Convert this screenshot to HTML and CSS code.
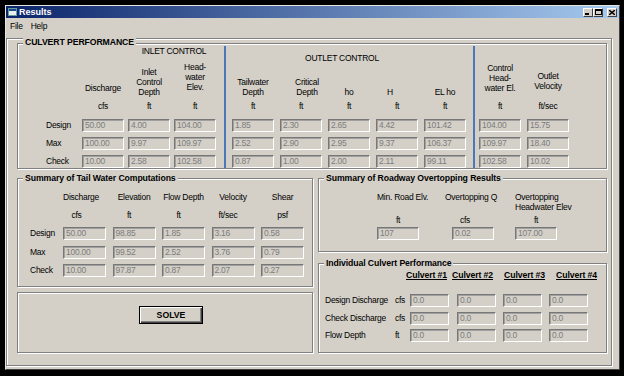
FILE: index.html
```html
<!DOCTYPE html>
<html lang="en">
<head>
    <meta charset="UTF-8">
    <meta name="viewport" content="width=device-width, initial-scale=1.0">
    <title>Results</title>
    <link rel="stylesheet" href="styles.css">
</head>
<body>
    <div class="window">
        <!-- Title Bar -->
        <div class="title-bar">
            <svg class="app-icon" width="9" height="8" viewBox="0 0 9 8">
                <rect x="0.5" y="0.5" width="8" height="7" fill="#e8f0f0" stroke="#6a9a9a"/>
                <rect x="1" y="1" width="7" height="2" fill="#1a4a8a"/>
            </svg>
            <span class="title-text">Results</span>
            <div class="title-buttons">
                <button class="tb-btn">
                    <svg width="6" height="6" viewBox="0 0 6 6"><rect x="0" y="4" width="4" height="2" fill="#000"/></svg>
                </button>
                <button class="tb-btn">
                    <svg width="7" height="6" viewBox="0 0 7 6"><rect x="0.5" y="0.5" width="6" height="5" fill="none" stroke="#000"/><rect x="0" y="0" width="7" height="2" fill="#000"/></svg>
                </button>
                <button class="tb-btn close">
                    <svg width="6" height="5" viewBox="0 0 6 5"><path d="M0 0 L6 5 M6 0 L0 5" stroke="#000" stroke-width="1.4"/></svg>
                </button>
            </div>
        </div>

        <!-- Menu -->
        <div class="menu-bar">
            <span>File</span>
            <span>Help</span>
        </div>

        <div class="main-frame">
            <!-- Culvert Performance -->
            <div class="group culvert">
                <span class="group-title caps">CULVERT PERFORMANCE</span>
                <div class="perf-grid">
                    <div class="vsep sep-inlet"></div>
                    <div class="vsep sep-outlet"></div>

                    <div class="span2"></div>
                    <div class="ctrl-title inlet">INLET CONTROL</div>
                    <div class="ctrl-title outlet">OUTLET CONTROL</div>
                    <div class="span2"></div>

                    <div></div>
                    <div class="hdr up4">Discharge</div>
                    <div class="hdr">Inlet<br>Control<br>Depth</div>
                    <div class="hdr up5">Head-<br>water<br>Elev.</div>
                    <div class="hdr">Tailwater<br>Depth</div>
                    <div class="hdr nudge-r">Critical<br>Depth</div>
                    <div class="hdr">ho</div>
                    <div class="hdr nudge-l">H</div>
                    <div class="hdr">EL ho</div>
                    <div class="hdr up4">Control<br>Head-<br>water El.</div>
                    <div class="hdr up6">Outlet<br>Velocity</div>

                    <div></div>
                    <div class="unit">cfs</div>
                    <div class="unit">ft</div>
                    <div class="unit">ft</div>
                    <div class="unit">ft</div>
                    <div class="unit">ft</div>
                    <div class="unit">ft</div>
                    <div class="unit">ft</div>
                    <div class="unit">ft</div>
                    <div class="unit">ft</div>
                    <div class="unit">ft/sec</div>

                    <div class="row-label">Design</div>
                    <div class="field">50.00</div>
                    <div class="field">4.00</div>
                    <div class="field">104.00</div>
                    <div class="field">1.85</div>
                    <div class="field">2.30</div>
                    <div class="field">2.65</div>
                    <div class="field">4.42</div>
                    <div class="field">101.42</div>
                    <div class="field">104.00</div>
                    <div class="field">15.75</div>

                    <div class="row-label">Max</div>
                    <div class="field">100.00</div>
                    <div class="field">9.97</div>
                    <div class="field">109.97</div>
                    <div class="field">2.52</div>
                    <div class="field">2.90</div>
                    <div class="field">2.95</div>
                    <div class="field">9.37</div>
                    <div class="field">106.37</div>
                    <div class="field">109.97</div>
                    <div class="field">18.40</div>

                    <div class="row-label">Check</div>
                    <div class="field">10.00</div>
                    <div class="field">2.58</div>
                    <div class="field">102.58</div>
                    <div class="field">0.87</div>
                    <div class="field">1.00</div>
                    <div class="field">2.00</div>
                    <div class="field">2.11</div>
                    <div class="field">99.11</div>
                    <div class="field">102.58</div>
                    <div class="field">10.02</div>
                </div>
            </div>

            <div class="lower">
                <div class="col col-left">
                    <!-- Tail Water -->
                    <div class="group tailwater">
                        <span class="group-title">Summary of Tail Water Computations</span>
                        <div class="tw-grid">
                            <div></div>
                            <div class="tw-hdr nudge-l">Discharge</div>
                            <div class="tw-hdr">Elevation</div>
                            <div class="tw-hdr">Flow Depth</div>
                            <div class="tw-hdr">Velocity</div>
                            <div class="tw-hdr">Shear</div>

                            <div></div>
                            <div class="tw-unit far-l">cfs</div>
                            <div class="tw-unit nudge-l">ft</div>
                            <div class="tw-unit nudge-l">ft</div>
                            <div class="tw-unit nudge-l">ft/sec</div>
                            <div class="tw-unit">psf</div>

                            <div class="row-label">Design</div>
                            <div class="field">50.00</div>
                            <div class="field">98.85</div>
                            <div class="field">1.85</div>
                            <div class="field">3.16</div>
                            <div class="field">0.58</div>

                            <div class="row-label">Max</div>
                            <div class="field">100.00</div>
                            <div class="field">99.52</div>
                            <div class="field">2.52</div>
                            <div class="field">3.76</div>
                            <div class="field">0.79</div>

                            <div class="row-label">Check</div>
                            <div class="field">10.00</div>
                            <div class="field">97.87</div>
                            <div class="field">0.87</div>
                            <div class="field">2.07</div>
                            <div class="field">0.27</div>
                        </div>
                    </div>

                    <div class="group solve-box">
                        <button class="solve-btn">SOLVE</button>
                    </div>
                </div>

                <div class="col col-right">
                    <!-- Roadway Overtopping -->
                    <div class="group roadway">
                        <span class="group-title">Summary of Roadway Overtopping Results</span>
                        <div class="road-grid">
                            <div></div>
                            <div class="road-hdr">Min. Road Elv.</div>
                            <div class="road-hdr pull-l">Overtopping Q</div>
                            <div class="road-hdr">Overtopping<br>Headwater Elev</div>

                            <div></div>
                            <div class="road-unit">ft</div>
                            <div class="road-unit far-l">cfs</div>
                            <div class="road-unit">ft</div>

                            <div></div>
                            <div class="field">107</div>
                            <div class="field">0.02</div>
                            <div class="field">107.00</div>
                        </div>
                    </div>

                    <!-- Individual Culverts -->
                    <div class="group individual">
                        <span class="group-title">Individual Culvert Performance</span>
                        <div class="culvert-heads">
                            <div></div>
                            <div class="culvert-name">Culvert #1</div>
                            <div class="culvert-name">Culvert #2</div>
                            <div class="culvert-name">Culvert #3</div>
                            <div class="culvert-name">Culvert #4</div>
                        </div>
                        <div class="ind-grid">
                            <div class="ind-label">Design Discharge</div>
                            <div class="ind-unit">cfs</div>
                            <div class="field">0.0</div>
                            <div class="field">0.0</div>
                            <div class="field">0.0</div>
                            <div class="field">0.0</div>

                            <div class="ind-label">Check Discharge</div>
                            <div class="ind-unit">cfs</div>
                            <div class="field">0.0</div>
                            <div class="field">0.0</div>
                            <div class="field">0.0</div>
                            <div class="field">0.0</div>

                            <div class="ind-label">Flow Depth</div>
                            <div class="ind-unit">ft</div>
                            <div class="field">0.0</div>
                            <div class="field">0.0</div>
                            <div class="field">0.0</div>
                            <div class="field">0.0</div>
                        </div>
                    </div>
                </div>
            </div>
        </div>
    </div>
</body>
</html>
```

FILE: styles.css
```css
* {
    margin: 0;
    padding: 0;
    box-sizing: border-box;
}

body {
    background: #000;
    font-family: "Liberation Sans", Arial, sans-serif;
    font-size: 8.5px;
    letter-spacing: -0.25px;
    color: #000;
}

/* Window chrome */
.window {
    width: 615px;
    height: 365px;
    margin: 5px 0 0 5px;
    background: #d4d0c8;
    border: 1px solid;
    border-color: #e8e6e1 #404040 #404040 #e8e6e1;
}

.title-bar {
    height: 12px;
    display: flex;
    align-items: center;
    padding: 0 2px 0 2px;
    background: linear-gradient(to right, #0a246a, #a6caf0);
    color: #fff;
}

.app-icon {
    display: block;
}

.title-text {
    font-weight: bold;
    font-size: 9px;
    letter-spacing: 0;
    margin-left: 2px;
}

.title-buttons {
    margin-left: auto;
    display: flex;
}

.tb-btn {
    width: 10px;
    height: 9px;
    background: #d4d0c8;
    border: 1px solid;
    border-color: #fff #404040 #404040 #fff;
    display: flex;
    align-items: center;
    justify-content: center;
}

.tb-btn svg {
    display: block;
}

.tb-btn.close {
    margin-left: 4px;
}

.menu-bar {
    height: 15px;
    display: flex;
    align-items: center;
    gap: 8px;
    padding-left: 4px;
}

/* Frames */
.main-frame {
    width: 606px;
    margin-top: 5px;
    padding: 4px 4px 12px 10px;
    border: 1px solid #808080;
    box-shadow: 1px 1px 0 #fff, inset 1px 1px 0 #fff;
}

.group {
    position: relative;
    border: 1px solid #808080;
    box-shadow: 1px 1px 0 #fff, inset 1px 1px 0 #fff;
}

.group-title {
    position: absolute;
    top: -6px;
    left: 5px;
    padding: 0 2px;
    line-height: 10px;
    font-size: 8.7px;
    font-weight: bold;
    letter-spacing: -0.1px;
    background: #d4d0c8;
}

.group-title.caps {
    top: -7px;
}

.field {
    width: 42px;
    height: 13px;
    padding-left: 2px;
    line-height: 11px;
    color: #7c7c7c;
    background: #d4d0c8;
    border: 1px solid;
    border-color: #777 #fff #fff #777;
    box-shadow: inset 1px 1px 0 #a0a0a0;
}

.row-label {
    line-height: 13px;
}

.nudge-l {
    padding-right: 10px;
}

.nudge-r {
    padding-left: 12px;
}

.far-l {
    padding-right: 16px;
}

/* Culvert performance */
.culvert {
    padding-top: 2px;
}

.perf-grid {
    display: grid;
    grid-template-columns: 64px 46px 46px 46px 12px 48px 48px 48px 48px 48px 7px 48px 48px;
    grid-template-rows: 17px 38px 18px 18px 18px 13px;
}

.perf-grid .row-label {
    padding-left: 28px;
}

.vsep {
    grid-row: 1 / -1;
    width: 2px;
    background: #4a78b8;
}

.sep-inlet {
    grid-column: 5;
    margin-left: 4px;
}

.sep-outlet {
    grid-column: 11;
    margin-left: 1px;
}

.span2 {
    grid-column: span 2;
}

.ctrl-title {
    line-height: 10px;
    text-align: center;
}

.ctrl-title.inlet {
    grid-column: span 2;
    align-self: start;
}

.ctrl-title.outlet {
    grid-column: span 5;
    align-self: end;
    padding-right: 20px;
}

.hdr {
    width: 42px;
    align-self: end;
    text-align: center;
    line-height: 10px;
    padding-bottom: 4px;
}

.hdr.up4 { padding-bottom: 8px; }
.hdr.up5 { padding-bottom: 9px; }
.hdr.up6 { padding-bottom: 10px; }
.hdr.nudge-l { padding-right: 14px; }

.unit {
    width: 42px;
    text-align: center;
    line-height: 11px;
}

/* Lower panels */
.lower {
    display: flex;
    gap: 5px;
    margin-top: 9px;
}

.col {
    display: flex;
    flex-direction: column;
}

.col-left {
    width: 296px;
    gap: 5px;
}

.col-right {
    width: 289px;
    gap: 11px;
}

.tailwater {
    padding: 13px 0 9px;
}

.tw-grid {
    display: grid;
    grid-template-columns: 38.5px repeat(5, 43px);
    grid-template-rows: 17px 18px 18.5px 18.5px 13px;
    column-gap: 6.5px;
}

.tw-grid .row-label {
    padding-left: 12px;
}

.tw-grid .field {
    width: 43px;
}

.tw-hdr {
    text-align: center;
    line-height: 10px;
}

.tw-unit {
    text-align: center;
    line-height: 12px;
}

.solve-box {
    flex: 1;
    padding: 13px 0 0 121px;
}

.solve-btn {
    width: 64px;
    height: 18px;
    font-family: inherit;
    font-size: 8.7px;
    font-weight: bold;
    color: #000;
    background: #d4d0c8;
    border: 1px solid #000;
    box-shadow: inset 1px 1px 0 #fff, inset -1px -1px 0 #404040, inset -2px -2px 0 #808080;
}

.roadway {
    padding: 13px 0 11px;
}

.road-grid {
    display: grid;
    grid-template-columns: 58px 75px 63px 80px;
    grid-template-rows: 22px 13px 13px;
}

.road-hdr {
    line-height: 10px;
}

.road-hdr.pull-l {
    margin-left: -7px;
}

.road-unit {
    width: 42px;
    text-align: center;
    line-height: 13px;
}

.individual {
    flex: 1;
    padding: 6px 0 10px;
}

.culvert-heads {
    display: grid;
    grid-template-columns: 87px 46px 52px 52px 52px;
    line-height: 10px;
}

.culvert-name {
    font-size: 8.7px;
    font-weight: bold;
    letter-spacing: -0.1px;
    text-decoration: underline;
}

.ind-grid {
    display: grid;
    grid-template-columns: 76px 15px 47px 46px 46px 46px;
    grid-template-rows: 17.5px 17.5px 13px;
    margin-top: 14px;
}

.ind-grid .field {
    width: 39px;
}

.ind-label {
    padding-left: 6px;
    line-height: 13px;
}

.ind-unit {
    line-height: 13px;
}
```
